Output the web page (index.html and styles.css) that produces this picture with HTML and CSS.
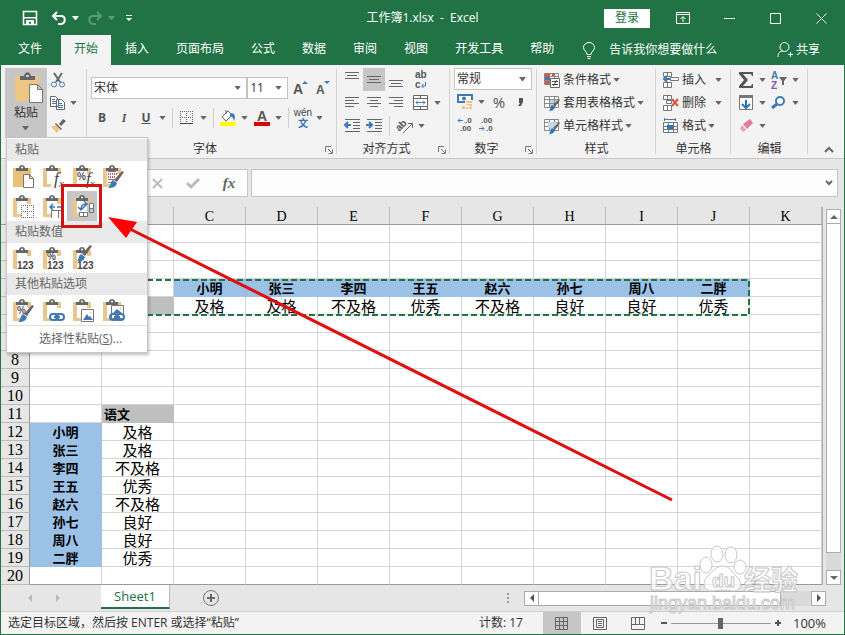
FILE: index.html
```html
<!DOCTYPE html>
<html lang="zh-CN">
<head>
    <meta charset="UTF-8">
    <meta name="viewport" content="width=device-width, initial-scale=1.0">
    <title>工作簿1.xlsx - Excel</title>
    <link rel="stylesheet" href="styles.css">
</head>
<body>
    <!-- shared icon shapes -->
    <svg class="sprite" aria-hidden="true">
        <symbol id="clip" viewBox="0 0 24 26">
            <path fill="#fff" d="M5 5h10v15H5z"/>
            <path fill="#e8c78e" d="M1 4h4v16h4v3H1zM15 4h4v6h-4z"/>
            <path fill="#666" d="M4 7V4h3c0-4 6-4 6 0h3v3z"/>
            <circle cx="10" cy="3.500" r="1" fill="#fff"/>
        </symbol>
        <symbol id="brush" viewBox="0 0 24 26">
            <path fill="#666" d="M20 7l2 1-7 10-3-2z"/>
            <path fill="#3f78b5" d="M11 16l4 3c-1 4-4 5-9 5 3-2 2-6 5-8z"/>
        </symbol>
        <symbol id="chain" viewBox="0 0 24 26">
            <g fill="none" stroke="#3f78b5" stroke-width="2"><rect x="8" y="16" width="8" height="6" rx="3"/><rect x="14" y="16" width="8" height="6" rx="3"/><path d="M12 19h6"/></g>
        </symbol>
        <symbol id="cellbox" viewBox="0 0 16 16">
            <path fill="#fff" stroke="#888" d="M.5 1.500h14v11H.5zM.5 4.500h14M.5 8.500h14M5.500 1.500v11M10.500 1.500v11"/>
        </symbol>
        <symbol id="pen" viewBox="0 0 16 16">
            <path fill="#666" d="M15 4l1 1-5 7-2-2z"/>
            <path fill="#2f74b5" d="M8 10l3 2c-1 3-3 4-6 4 2-2 1-5 3-6z"/>
        </symbol>
        <symbol id="launch" viewBox="0 0 8 8">
            <path fill="none" stroke="#777" d="M.5 6V.5H6M3 3l4 4M7.500 3.500v4h-4"/>
        </symbol>
    </svg>

    <div class="window">
        <header class="titlebar">
            <div class="quick">
                <button class="tool" aria-label="保存"><svg width="16" height="16" viewBox="0 0 16 16"><path fill="none" stroke="#fff" stroke-width="1.500" d="M1.500 1.500h13v13h-13z"/><path fill="#fff" d="M2 7h12v1.500H2zM4 10h8v5h-3v-3H7v3H4z"/></svg></button>
                <button class="tool undo" aria-label="撤消"><svg width="16" height="14" viewBox="0 0 16 14"><path fill="none" stroke="#fff" stroke-width="2" d="M6 1L2 5l4 4M2 5h8c5 0 5 7 0 8H7"/></svg></button>
                <i class="arrow light"></i>
                <button class="tool redo" aria-label="恢复"><svg width="16" height="14" viewBox="0 0 16 14"><path fill="none" stroke="#5c9a77" stroke-width="2" d="M10 1l4 4-4 4M14 5H6C1 5 1 12 6 13h3"/></svg></button>
                <i class="arrow faded"></i>
                <button class="tool more" aria-label="自定义快速访问工具栏"><svg width="6" height="8" viewBox="0 0 6 8"><path fill="#fff" d="M0 1h6v1H0zM0 4h6L3 7z"/></svg></button>
            </div>
            <div class="doc-title">工作簿1.xlsx &nbsp;- &nbsp;Excel</div>
            <div class="controls">
                <button class="login">登录</button>
                <button class="control" aria-label="功能区显示选项"><svg width="14" height="12" viewBox="0 0 14 12"><path fill="none" stroke="#fff" d="M.5.500h13v11H.5zM.5 2.500h13M7 10V5M4.500 7L7 4.500 9.500 7"/></svg></button>
                <button class="control" aria-label="最小化"><svg width="11" height="11" viewBox="0 0 11 11"><path stroke="#fff" d="M0 5.500h11"/></svg></button>
                <button class="control" aria-label="最大化"><svg width="11" height="11" viewBox="0 0 11 11"><path fill="none" stroke="#fff" d="M.5.500h10v10H.5z"/></svg></button>
                <button class="control" aria-label="关闭"><svg width="11" height="11" viewBox="0 0 11 11"><path stroke="#fff" d="M.5.500l10 10M10.500.500l-10 10"/></svg></button>
            </div>
        </header>

        <nav class="tabs">
            <button class="tab file">文件</button>
            <button class="tab active">开始</button>
            <button class="tab">插入</button>
            <button class="tab">页面布局</button>
            <button class="tab">公式</button>
            <button class="tab">数据</button>
            <button class="tab">审阅</button>
            <button class="tab">视图</button>
            <button class="tab">开发工具</button>
            <button class="tab">帮助</button>
            <button class="tell"><svg width="12" height="17" viewBox="0 0 12 17"><path fill="none" stroke="#fff" d="M4 12.500c0-3-3.500-4-3.500-7a5.500 5 0 0 1 11 0c0 3-3.500 4-3.500 7zM4 14.500h4M4.500 16.500h3"/></svg>告诉我你想要做什么</button>
            <button class="share"><svg width="16" height="16" viewBox="0 0 16 16"><path fill="none" stroke="#fff" d="M1 15c0-4 2-6 5-6M11 12.500h5M13.500 10v5"/><circle cx="7.500" cy="5" r="4.500" fill="none" stroke="#fff"/></svg>共享</button>
        </nav>

        <section class="ribbon">
            <div class="group clipboard">
                <div class="paste">
                    <button class="paste-button">
                        <svg width="30" height="31" viewBox="0 0 30 31"><path fill="#edc683" d="M1 4h24v25H1z"/><path fill="#666" d="M6 8V4h4c1-5 6-5 7 0h4v4z"/><path fill="#c6c6c6" d="M12 3h3v2h-3z"/><path fill="#fff" stroke="#777" d="M15.500 12.500h8l5 5v13h-13zM23.500 12.500v5h5"/></svg>
                        <span>粘贴</span>
                        <i class="arrow"></i>
                    </button>
                    <div class="menu">
                        <h2 class="menu-title">粘贴</h2>
                        <div class="menu-items">
                            <button class="item" aria-label="粘贴"><svg class="big"><path fill="#e8c07a" d="M1 4h18v19H1z"/><path fill="#666" d="M4 7V4h3c0-4 6-4 6 0h3v3z"/><circle cx="10" cy="3.500" r="1" fill="#fff"/><path fill="#fff" stroke="#777" d="M11.500 10.500h6l4 4v9h-10zM17.500 10.500v4h4"/></svg></button>
                            <button class="item" aria-label="公式"><svg class="big"><use href="#clip"/><text class="fx" x="12" y="20">f</text><text class="fx small" x="17" y="23">x</text></svg></button>
                            <button class="item" aria-label="公式和数字格式"><svg class="big"><use href="#clip"/><text class="pct" x="5" y="16">%</text><text class="fx" x="14" y="20">f</text><text class="fx small" x="18" y="23">x</text></svg></button>
                            <button class="item" aria-label="保留源格式"><svg class="big"><use href="#clip"/><path stroke="#777" d="M6 7.500h8M6 15.500h8M6 18.500h5"/><path stroke="#c55" stroke-width="2" stroke-dasharray="1 1" d="M6 10h9M6 13h8"/><use href="#brush"/></svg></button>
                            <button class="item" aria-label="无边框"><svg class="big"><use href="#clip"/><path fill="#fff" d="M9 11h13v12H9z"/><path fill="none" stroke="#666" stroke-dasharray="1 1" d="M9 11.500h13M9 17.500h13M9 23.500h13M9.500 11v12M15.500 11v12M21.500 11v12"/></svg></button>
                            <button class="item" aria-label="保留源列宽"><svg class="big"><use href="#clip"/><path fill="#fff" d="M9 16h13v8H9z"/><path fill="none" stroke="#777" d="M9.500 24v-7.500H22M16.500 17v7"/><path fill="none" stroke="#3f78b5" stroke-width="1.500" d="M11 10l-3 3 3 3M8 13h5M15 13h4"/></svg></button>
                            <button class="item selected" aria-label="转置"><svg class="big"><use href="#clip"/><path fill="#c6c6c6" d="M15 10h8v14h-8zM6 18h11v6H6z"/><path fill="#fff" stroke="#777" d="M7.500 18.500h8v4h-8zM11.500 18.500v4M17.500 9.500h4v9h-4z"/><path fill="#b8cde6" stroke="#777" d="M17.500 14.500h4v4h-4z"/><path fill="none" stroke="#3f78b5" stroke-width="1.500" d="M9 16c0-4 1-6 5-6M12 7l3 3-3 3M6 13l3 3 3-3"/></svg></button>
                        </div>
                        <h2 class="menu-title">粘贴数值</h2>
                        <div class="menu-items">
                            <button class="item" aria-label="值"><svg class="big"><use href="#clip"/><path fill="#fff" d="M5 15h17v9H5z"/><text class="num" x="5" y="23">123</text></svg></button>
                            <button class="item" aria-label="值和数字格式"><svg class="big"><use href="#clip"/><text class="pct" x="5" y="14">%</text><path fill="#fff" d="M5 15h17v9H5z"/><text class="num" x="5" y="23">123</text></svg></button>
                            <button class="item" aria-label="值和源格式"><svg class="big"><use href="#clip"/><use href="#brush" x="-2" y="-8" width="24" height="26"/><path fill="#fff" d="M5 15h17v9H5z"/><text class="num" x="5" y="23">123</text></svg></button>
                        </div>
                        <h2 class="menu-title">其他粘贴选项</h2>
                        <div class="menu-items">
                            <button class="item" aria-label="格式"><svg class="big"><use href="#clip"/><text class="pct" x="5" y="16">%</text><use href="#brush"/></svg></button>
                            <button class="item" aria-label="粘贴链接"><svg class="big"><use href="#clip"/><use href="#chain"/></svg></button>
                            <button class="item" aria-label="图片"><svg class="big"><use href="#clip"/><path fill="#fff" stroke="#777" d="M9.500 11.500h12v12h-12z"/><path fill="#3f78b5" d="M11 22l4-6 2 3 1-1 3 4z"/><circle cx="18.500" cy="14.500" r="1" fill="#edc683"/></svg></button>
                            <button class="item" aria-label="链接的图片"><svg class="big"><use href="#clip"/><path fill="#fff" stroke="#777" d="M9.500 7.500h12v13h-12z"/><path fill="#3f78b5" d="M11 15l4-4 5 4z"/><circle cx="18.500" cy="10.500" r="1" fill="#edc683"/><use href="#chain"/></svg></button>
                        </div>
                        <button class="menu-special">选择性粘贴(<u>S</u>)...</button>
                    </div>
                </div>
                <div class="clip-tools">
                    <button class="tool" aria-label="剪切"><svg width="16" height="16" viewBox="0 0 16 16"><path stroke="#666" stroke-width="2" d="M4 1l6 9M12 1L6 10"/><g fill="none" stroke="#3f78b5"><circle cx="4" cy="12.500" r="2.500"/><circle cx="12" cy="12.500" r="2.500"/></g></svg></button>
                    <div class="row"><button class="tool" aria-label="复制"><svg width="16" height="16" viewBox="0 0 16 16"><path fill="#fff" stroke="#666" d="M.5 1.500h5l3 3v7h-8zM6.500 4.500h5l3 3v7h-8z"/><path stroke="#3f78b5" d="M2 4.500h3M2 6.500h4M2 8.500h4M8 8.500h4M8 10.500h5M8 12.500h5"/></svg></button><i class="arrow"></i></div>
                    <button class="tool" aria-label="格式刷"><svg width="16" height="16" viewBox="0 0 16 16"><path fill="#edc683" d="M1 9l5-2 4 4-3 4z"/><path fill="#666" d="M6 5l6 6-1 1-6-6zM9 6l4-5 3 2-5 5z"/></svg></button>
                </div>
            </div>

            <div class="group font">
                <div class="group-body">
                    <div class="row top">
                        <span class="combo family"><select aria-label="字体"><option>宋体</option></select><i class="arrow"></i></span>
                        <span class="combo size"><select aria-label="字号"><option>11</option></select><i class="arrow"></i></span>
                        <button class="tool" aria-label="增大字号"><svg width="16" height="16" viewBox="0 0 16 16"><text class="glyph" x="1" y="14">A</text><path fill="#3f78b5" d="M10 4l3-3 3 3z"/></svg></button>
                        <button class="tool" aria-label="减小字号"><svg width="16" height="16" viewBox="0 0 16 16"><text class="glyph less" x="2" y="14">A</text><path fill="#3f78b5" d="M10 1h6l-3 3z"/></svg></button>
                    </div>
                    <div class="row low">
                        <button class="tool"><b>B</b></button>
                        <button class="tool"><em>I</em></button>
                        <button class="tool"><u>U</u></button><i class="arrow"></i>
                        <i class="sep"></i>
                        <button class="tool" aria-label="边框"><svg width="14" height="14" viewBox="0 0 14 14"><path fill="none" stroke="#666" stroke-dasharray="1 1" d="M0 .5h13M0 6.500h13M.5 0v12M6.500 0v12M12.500 0v12"/><path stroke="#444" d="M0 12.500h13"/></svg></button><i class="arrow"></i>
                        <i class="sep"></i>
                        <button class="tool" aria-label="填充颜色"><svg width="18" height="18" viewBox="0 0 18 18"><path fill="#fff" stroke="#666" d="M3 8l6-6 4 4-6 6zM7 5V1"/><path fill="#3f78b5" d="M11 4c5 0 6 3 4 8-1-3-1-4-4-5z"/><path fill="#ff0" d="M1 13h16v4H1z"/></svg></button><i class="arrow"></i>
                        <button class="tool" aria-label="字体颜色"><svg width="18" height="18" viewBox="0 0 18 18"><text class="glyph" x="4" y="12">A</text><path fill="#e00000" d="M1 13h16v4H1z"/></svg></button><i class="arrow"></i>
                        <i class="sep"></i>
                        <button class="tool pinyin">wén<span>文</span></button><i class="arrow"></i>
                    </div>
                </div>
                <div class="group-name"><span>字体</span><svg class="launch"><use href="#launch"/></svg></div>
            </div>

            <div class="group align">
                <div class="group-body">
                    <div class="row">
                        <button class="tool" aria-label="顶端对齐"><svg width="16" height="16" viewBox="0 0 16 16"><path stroke="#666" d="M1 .5h14M3 3.500h10M1 6.500h14"/></svg></button>
                        <button class="tool pressed" aria-label="垂直居中"><svg width="16" height="16" viewBox="0 0 16 16"><path stroke="#666" d="M1 4.500h14M3 7.500h10M1 10.500h14"/></svg></button>
                        <button class="tool" aria-label="底端对齐"><svg width="16" height="16" viewBox="0 0 16 16"><path stroke="#666" d="M1 8.500h14M3 11.500h10M1 14.500h14"/></svg></button>
                        <button class="tool wide" aria-label="自动换行"><svg width="16" height="18" viewBox="0 0 16 18"><text class="wrap" x="2" y="7">ab</text><text class="wrap" x="2" y="17">c</text><path fill="none" stroke="#3f78b5" d="M12.500 11v4H9M10.500 13L8.500 15l2 2"/></svg></button>
                    </div>
                    <div class="row">
                        <button class="tool" aria-label="左对齐"><svg width="16" height="16" viewBox="0 0 16 16"><path stroke="#666" d="M1 2.500h14M1 5.500h9M1 8.500h14M1 11.500h9"/></svg></button>
                        <button class="tool" aria-label="居中"><svg width="16" height="16" viewBox="0 0 16 16"><path stroke="#666" d="M1 2.500h14M4 5.500h8M1 8.500h14M4 11.500h8"/></svg></button>
                        <button class="tool" aria-label="右对齐"><svg width="16" height="16" viewBox="0 0 16 16"><path stroke="#666" d="M1 2.500h14M6 5.500h9M1 8.500h14M6 11.500h9"/></svg></button>
                        <button class="tool wide" aria-label="合并后居中"><svg width="16" height="16" viewBox="0 0 16 16"><path fill="#fff" stroke="#666" d="M.5.500h14v14H.5zM.5 3.500h14M.5 11.500h14M7.500.500v3M7.500 11.500v3"/><path fill="none" stroke="#3f78b5" d="M3 7.500h9M5 5.500l-2 2 2 2M10 5.500l2 2-2 2"/></svg></button><i class="arrow"></i>
                    </div>
                    <div class="row">
                        <button class="tool" aria-label="减少缩进量"><svg width="16" height="16" viewBox="0 0 16 16"><path stroke="#666" d="M1 1.500h15M9 4.500h7M9 7.500h7M9 10.500h7M1 13.500h15"/><path fill="none" stroke="#3f78b5" stroke-width="2" d="M1 7h6M4 4L1 7l3 3"/></svg></button>
                        <button class="tool" aria-label="增加缩进量"><svg width="16" height="16" viewBox="0 0 16 16"><path stroke="#666" d="M1 1.500h15M9 4.500h7M9 7.500h7M9 10.500h7M1 13.500h15"/><path fill="none" stroke="#3f78b5" stroke-width="2" d="M0 7h6M3 4l3 3-3 3"/></svg></button>
                        <i class="sep"></i>
                        <button class="tool" aria-label="方向"><svg width="18" height="16" viewBox="0 0 18 16"><text class="wrap" transform="rotate(-45 6 11)" x="2" y="11">ab</text><path fill="none" stroke="#666" d="M7 15l9-9M12 5.500h4.500V10"/></svg></button><i class="arrow"></i>
                    </div>
                </div>
                <div class="group-name"><span>对齐方式</span><svg class="launch"><use href="#launch"/></svg></div>
            </div>

            <div class="group number">
                <div class="group-body">
                    <div class="row"><span class="combo format"><select aria-label="数字格式"><option>常规</option></select><i class="arrow"></i></span></div>
                    <div class="row">
                        <button class="tool" aria-label="会计数字格式"><svg width="16" height="16" viewBox="0 0 16 16"><path fill="#3f78b5" d="M0 0h16v9H0z"/><path fill="#fff" d="M2 2h12v5H2z"/><circle cx="7" cy="4.500" r="2" fill="#3f78b5"/><path fill="#edc683" stroke="#f3f3f3" d="M8.500 6.500h7v9h-7zM4.500 11.500h7v4h-7zM8.500 9.500h7M8.500 12.500h7"/></svg></button><i class="arrow"></i>
                        <button class="tool percent">%</button>
                        <button class="tool" aria-label="千位分隔样式"><svg width="6" height="8" viewBox="0 0 6 8"><path fill="#555" d="M1 0h4v4L3 8H0l2-3H1z"/></svg></button>
                    </div>
                    <div class="row">
                        <button class="tool" aria-label="增加小数位数"><svg width="16" height="16" viewBox="0 0 16 16"><text class="dec" x="8" y="6">.0</text><text class="dec" x="3" y="14">.00</text><path fill="none" stroke="#3f78b5" d="M1 3.500h5M3 1.500l-2 2 2 2"/></svg></button>
                        <button class="tool" aria-label="减少小数位数"><svg width="16" height="16" viewBox="0 0 16 16"><text class="dec" x="2" y="6">.00</text><text class="dec" x="7" y="14">.0</text><path fill="none" stroke="#3f78b5" d="M0 11.500h5M3 9.500l2 2-2 2"/></svg></button>
                    </div>
                </div>
                <div class="group-name"><span>数字</span><svg class="launch"><use href="#launch"/></svg></div>
            </div>

            <div class="group styles">
                <div class="group-body">
                    <button class="command"><svg width="16" height="16" viewBox="0 0 16 16"><use href="#cellbox"/><path fill="#c0614d" d="M1 1h5v4H1zM1 9h4v4H1zM8 1h3v3H8z"/><path fill="#3f78b5" d="M1 5h5v3H1z"/><path fill="#fff" stroke="#666" d="M6.500 6.500h9v9h-9z"/><path stroke="#444" d="M8 9.500h6M8 12.500h6M12.500 8l-3 6"/></svg>条件格式<i class="arrow"></i></button>
                    <button class="command"><svg width="16" height="16" viewBox="0 0 16 16"><use href="#cellbox"/><path fill="#c4d6ea" d="M6 5h4v3H6zM6 9h4v3H6zM11 5h3v3h-3z"/><use href="#pen"/></svg>套用表格格式<i class="arrow"></i></button>
                    <button class="command"><svg width="16" height="16" viewBox="0 0 16 16"><use href="#cellbox"/><path fill="#c4d6ea" d="M4 4h8v6H4z"/><use href="#pen"/></svg>单元格样式<i class="arrow"></i></button>
                </div>
                <div class="group-name"><span>样式</span></div>
            </div>

            <div class="group cells">
                <div class="group-body">
                    <button class="command spread"><svg width="16" height="16" viewBox="0 0 16 16"><path fill="#fff" stroke="#777" d="M.5.500h8v4h-8zM4.500.500v4M.5 10.500h8v5h-8zM4.500 10.500v5M7.500 5.500h8v3h-8z"/><path fill="none" stroke="#3f78b5" stroke-width="2" d="M1 7h6M4 4L1 7l3 3"/></svg>插入<i class="arrow"></i></button>
                    <button class="command spread"><svg width="16" height="16" viewBox="0 0 16 16"><path fill="#fff" stroke="#777" d="M.5.500h8v4h-8zM4.500.500v4M.5 10.500h8v5h-8zM4.500 10.500v5M3.500 5.500h5v3h-5z"/><path stroke="#d8563f" stroke-width="2" d="M9 4l6 7M15 4l-6 7"/></svg>删除<i class="arrow"></i></button>
                    <button class="command"><svg width="16" height="16" viewBox="0 0 16 16"><path fill="#fff" stroke="#777" d="M.5 4.500h14v10H.5zM.5 8.500h14M.5 11.500h14M5.500 4.500v10M10.500 4.500v10"/><path fill="#2f74b5" d="M4 7h6v4H4z"/><path fill="none" stroke="#3f78b5" d="M1 1.500h12M1.500 0v3M12.500 0v3"/></svg>格式<i class="arrow"></i></button>
                </div>
                <div class="group-name"><span>单元格</span></div>
            </div>

            <div class="group edit">
                <div class="group-body">
                    <div class="row">
                        <button class="tool" aria-label="自动求和"><svg width="16" height="16" viewBox="0 0 16 16"><path fill="#555" d="M1 0h14v4h-1l-1-2H5l5 6-5 6h8l1-2h1v4H1v-2l5-6-5-6z"/></svg></button><i class="arrow"></i>
                        <button class="tool" aria-label="排序和筛选"><svg width="16" height="18" viewBox="0 0 16 18"><text class="sort" fill="#3f78b5" x="0" y="8">A</text><text class="sort" fill="#8a4fb0" x="0" y="18">Z</text><path fill="#666" d="M8 6h8l-3 4v4h-2v-4z"/></svg></button><i class="arrow"></i>
                    </div>
                    <div class="row">
                        <button class="tool" aria-label="填充"><svg width="16" height="16" viewBox="0 0 16 16"><path fill="#fff" stroke="#777" d="M1.500.500h13v14h-13z"/><path fill="#777" d="M1 0h14v3H1z"/><path fill="none" stroke="#2f74b5" stroke-width="2" d="M8 5v8M4 9l4 4 4-4"/></svg></button><i class="arrow"></i>
                        <button class="tool" aria-label="查找和选择"><svg width="16" height="16" viewBox="0 0 16 16"><circle cx="9" cy="6" r="4" fill="#fff" stroke="#3f78b5" stroke-width="2"/><path stroke="#3f78b5" stroke-width="3" d="M6 9l-5 4"/></svg></button><i class="arrow"></i>
                    </div>
                    <div class="row">
                        <button class="tool" aria-label="清除"><svg width="16" height="16" viewBox="0 0 16 16"><path fill="#e07f98" d="M5 6l7-5 3 4-6 6z"/><path fill="#e8a0b2" d="M4 7l4 5-3 2-3-3z"/></svg></button><i class="arrow"></i>
                    </div>
                </div>
                <div class="group-name"><span>编辑</span></div>
            </div>
            <button class="collapse" aria-label="折叠功能区"><svg width="10" height="7" viewBox="0 0 10 7"><path fill="none" stroke="#666" stroke-width="2" d="M1 5l4-4 4 4"/></svg></button>
        </section>

        <section class="formula-bar">
            <input class="name-box" type="text" aria-label="名称框">
            <div class="formula-tools">
                <button class="tool" aria-label="取消"><svg width="11" height="11" viewBox="0 0 11 11"><path stroke="#bbb" stroke-width="2" d="M1 1l9 9M10 1l-9 9"/></svg></button>
                <button class="tool" aria-label="输入"><svg width="14" height="11" viewBox="0 0 14 11"><path fill="none" stroke="#bbb" stroke-width="3" d="M1 5l4 4 8-8"/></svg></button>
                <button class="tool insert-fx">fx</button>
            </div>
            <div class="formula-box">
                <input type="text" aria-label="编辑栏">
                <svg width="8" height="6" viewBox="0 0 8 6"><path fill="none" stroke="#666" stroke-width="2" d="M1 1l3 3 3-3"/></svg>
            </div>
        </section>

        <main class="sheet">
            <table class="grid" id="grid"></table>
            <div class="vscroll">
                <button class="scroll-button" aria-label="向上"><svg width="8" height="4" viewBox="0 0 8 4"><path fill="#666" d="M0 4l4-4 4 4z"/></svg></button>
                <div class="vtrack"><div class="vthumb"></div></div>
                <button class="scroll-button" aria-label="向下"><svg width="8" height="4" viewBox="0 0 8 4"><path fill="#666" d="M0 0h8L4 4z"/></svg></button>
            </div>
        </main>

        <div class="sheet-bar">
            <div class="sheet-nav"><svg width="4" height="8" viewBox="0 0 4 8"><path fill="#bbb" d="M4 0v8L0 4z"/></svg><svg width="4" height="8" viewBox="0 0 4 8"><path fill="#bbb" d="M0 0v8l4-4z"/></svg></div>
            <button class="sheet-tab">Sheet1</button>
            <button class="add-sheet" aria-label="新工作表"><svg width="16" height="16" viewBox="0 0 16 16"><circle cx="8" cy="8" r="7.500" fill="none" stroke="#777"/><path stroke="#666" stroke-width="2" d="M4 8h8M8 4v8"/></svg></button>
            <svg class="grip" width="2" height="11" viewBox="0 0 2 11"><path fill="#999" d="M0 0h2v2H0zM0 4h2v2H0zM0 8h2v2H0z"/></svg>
            <div class="hscroll">
                <button class="scroll-button" aria-label="向左"><svg width="4" height="8" viewBox="0 0 4 8"><path fill="#555" d="M4 0v8L0 4z"/></svg></button>
                <div class="htrack"><div class="hthumb"></div></div>
                <button class="scroll-button" aria-label="向右"><svg width="4" height="8" viewBox="0 0 4 8"><path fill="#555" d="M0 0v8l4-4z"/></svg></button>
            </div>
        </div>

        <footer class="status">
            <span class="message">选定目标区域，然后按 ENTER 或选择“粘贴”</span>
            <span class="count">计数: 17</span>
            <button class="view current" aria-label="普通"><svg width="13" height="13" viewBox="0 0 13 13"><path fill="none" stroke="#666" d="M.5.500h12v12H.5zM.5 4.500h12M.5 8.500h12M4.500.500v12M8.500.500v12"/></svg></button>
            <button class="view" aria-label="页面布局"><svg width="14" height="13" viewBox="0 0 14 13"><path fill="none" stroke="#666" d="M.5.500h13v12H.5zM3.500 2.500h7v8h-7zM5 4.500h4M5 6.500h4M5 8.500h4"/></svg></button>
            <button class="view" aria-label="分页预览"><svg width="14" height="13" viewBox="0 0 14 13"><path fill="none" stroke="#666" d="M.5.500h13v12H.5zM.5 7.500h8v-7M4.500.500v7M8.500 7.500h5"/></svg></button>
            <button class="zoom-step" aria-label="缩小"><svg width="8" height="8" viewBox="0 0 8 8"><path stroke="#555" stroke-width="2" d="M1 4h6"/></svg></button>
            <input class="zoom" type="range" min="0" max="100" value="50" aria-label="缩放">
            <button class="zoom-step" aria-label="放大"><svg width="8" height="8" viewBox="0 0 8 8"><path stroke="#555" stroke-width="2" d="M1 4h6M4 1v6"/></svg></button>
            <span class="zoom-value">100%</span>
        </footer>

        <svg class="pointer" width="566" height="286" viewBox="0 0 566 286"><path stroke="#e00f0f" stroke-width="3" d="M22 12l542 271"/><path fill="#f00" d="M0 0l29 5-11 16z"/></svg>

        <svg class="watermark" width="152" height="74" viewBox="0 0 152 74">
            <g class="mark">
                <text class="brand" x="0" y="47">Bai</text>
                <ellipse cx="57" cy="22" rx="6" ry="8"/><ellipse cx="68" cy="11" rx="6" ry="8"/><ellipse cx="82" cy="12" rx="6" ry="8"/><ellipse cx="91" cy="24" rx="6" ry="7"/>
                <path d="M74 23c7 0 9 7 14 11 6 5 4 14-3 14-5 0-6-1-11-1s-7 1-12 1c-8 0-9-10-3-15s8-10 15-10z"/>
                <text class="du" x="63" y="44">du</text>
                <text class="exp" x="95" y="47">经验</text>
                <text class="url" x="1" y="66">jingyan.baidu.com</text>
            </g>
        </svg>
    </div>

    <script>
        const columns = ["A", "B", "C", "D", "E", "F", "G", "H", "I", "J", "K"];
        const names = ["小明", "张三", "李四", "王五", "赵六", "孙七", "周八", "二胖"];
        const grades = ["及格", "及格", "不及格", "优秀", "不及格", "良好", "良好", "优秀"];
        const cells = {
            B5: ["语文", "subject"],
            B11: ["语文", "subject"]
        };

        for (let i = 0; i < names.length; i++) {
            cells[columns[i + 2] + 4] = [names[i], "name"];
            cells[columns[i + 2] + 5] = [grades[i], "grade"];
            cells["A" + (12 + i)] = [names[i], "name"];
            cells["B" + (12 + i)] = [grades[i], "grade"];
        }

        let html = "<thead><tr><th class='corner'></th>";
        for (const column of columns) {
            html += `<th scope="col">${column}</th>`;
        }
        html += "</tr></thead><tbody>";
        for (let row = 1; row <= 20; row++) {
            html += `<tr><th scope="row">${row}</th>`;
            for (const column of columns) {
                const cell = cells[column + row] || ["", ""];
                if (column + row === "A4") {
                    // copied range A4:J5
                    html += `<td class="copy-start"><svg class="ants"><rect x="1" y="1" width="100%" height="100%"/></svg></td>`;
                } else {
                    html += `<td class="${cell[1]}">${cell[0]}</td>`;
                }
            }
            html += "</tr>";
        }
        document.getElementById("grid").innerHTML = html + "</tbody>";
    </script>
</body>
</html>
```
FILE: styles.css
```css
* {
    box-sizing: border-box;
}

body {
    margin: 0;
    font-family: "Open Sans", "Noto Sans CJK SC", sans-serif;
    font-size: 12px;
    line-height: 16px;
    color: #333;
}

button, input, select {
    margin: 0;
    padding: 0;
    border: none;
    border-radius: 0;
    background: none;
    font: inherit;
    color: inherit;
}

svg {
    display: block;
    flex: none;
    overflow: visible;
}

svg text {
    font-family: "Liberation Sans", "Noto Sans CJK SC", sans-serif;
}

.sprite {
    position: absolute;
    width: 0;
    height: 0;
}

.window {
    position: relative;
    display: flex;
    flex-direction: column;
    min-height: 100vh;
    border: 1px solid #217346;
    background: #e6e6e6;
    overflow: hidden;
}

.row {
    display: flex;
    align-items: center;
}

.tool {
    display: flex;
    align-items: center;
    justify-content: center;
    width: 22px;
    height: 23px;
    flex: none;
}

.arrow {
    flex: none;
    width: 12px;
    height: 4px;
    background: #666;
    clip-path: polygon(2px 0, 9px 0, 6px 4px, 5px 4px);
}

.arrow.light {
    background: #fff;
}

.arrow.faded {
    background: #5c9a77;
}

.sep {
    width: 1px;
    height: 20px;
    margin: 0 4px;
    background: #d0d0d0;
}

/* title bar */
.titlebar {
    display: grid;
    grid-template-columns: 1fr auto 1fr;
    align-items: center;
    height: 34px;
    background: #217346;
    color: #fff;
}

.quick {
    display: flex;
    align-items: center;
    padding-left: 18px;
}

.undo {
    margin-left: 7px;
}

.redo {
    margin-left: 2px;
}

.controls {
    display: flex;
    align-items: center;
    justify-content: flex-end;
}

.login {
    width: 46px;
    height: 19px;
    margin-right: 10px;
    background: #fff;
    color: #217346;
}

.control {
    display: flex;
    align-items: center;
    justify-content: center;
    width: 46px;
    height: 30px;
}

/* ribbon tabs */
.tabs {
    display: flex;
    gap: 1px;
    height: 30px;
    padding: 0 24px 0 4px;
    background: #217346;
    color: #fff;
}

.tab {
    padding: 0 13px 2px;
}

.file {
    margin-right: 5px;
}

.tab.active {
    background: #f3f3f3;
    color: #217346;
}

.tell, .share {
    display: flex;
    align-items: center;
}

.tell {
    gap: 14px;
    margin-left: 15px;
}

.share {
    gap: 3px;
    margin-left: auto;
}

/* ribbon */
.ribbon {
    display: flex;
    height: 94px;
    border-bottom: 1px solid #c8c8c8;
    background: #f3f3f3;
}

.group {
    position: relative;
    display: flex;
    flex-direction: column;
    padding: 3px 4px 0;
}

.group::after {
    content: "";
    position: absolute;
    top: 4px;
    right: 0;
    bottom: 4px;
    width: 1px;
    background: #d4d4d4;
}

.group-body {
    height: 69px;
}

.group-name {
    display: flex;
    align-items: center;
    height: 21px;
    padding-top: 2px;
}

.group-name span {
    flex: 1;
    text-align: center;
}

.launch {
    width: 8px;
    height: 8px;
    margin: 2px 0 0 6px;
}

.clipboard {
    flex-direction: row;
    width: 86px;
}

.paste {
    position: relative;
    width: 42px;
}

.paste-button {
    display: flex;
    flex-direction: column;
    align-items: center;
    width: 100%;
    height: 70px;
    padding-top: 4px;
    background: #c6c6c6;
}

.paste-button svg {
    margin-left: 6px;
}

.paste-button span {
    padding-top: 2px;
}

.paste-button .arrow {
    margin-top: 5px;
}

.clip-tools .arrow {
    margin-left: -1px;
}

.font {
    width: 250px;
}

.align {
    width: 113px;
}

.number {
    width: 87px;
}

.styles {
    width: 119px;
}

.cells {
    width: 75px;
}

.edit {
    width: 77px;
}

.combo {
    display: grid;
    grid-template-columns: 1fr 14px;
    align-items: center;
    height: 22px;
    border: 1px solid #c3c3c3;
    background: #fff;
}

.combo select {
    grid-area: 1 / 1 / 2 / 3;
    width: 100%;
    height: 20px;
    padding-left: 2px;
    appearance: none;
}

.combo .arrow {
    grid-area: 1 / 2;
    pointer-events: none;
}

.family {
    width: 157px;
}

.size {
    width: 41px;
    margin-right: 1px;
}

.format {
    width: 78px;
}

.font .top {
    padding-top: 8px;
}

.font .low {
    padding-top: 7px;
}

.font .low .tool {
    font-size: 12px;
    color: #555;
}

.font .low .tool em {
    font-family: "Liberation Serif", serif;
    font-weight: bold;
}

.font .low .tool u {
    font-weight: bold;
}

.font .low .pinyin {
    flex-direction: column;
    font-family: "Liberation Sans", "Noto Sans CJK SC", sans-serif;
    font-size: 10px;
    line-height: 11px;
    color: #444;
}

.pinyin span {
    color: #2f74b5;
    font-weight: bold;
}

.font .low .sep {
    margin: 0 3px;
}

.pressed {
    background: #c6c6c6;
}

.wide {
    margin-left: 3px;
}

.percent {
    font-size: 15px;
    color: #555;
}

.command {
    display: flex;
    align-items: center;
    width: 100%;
    height: 23px;
    padding-left: 3px;
    white-space: nowrap;
}

.command svg {
    margin-right: 3px;
}

.spread .arrow {
    margin-left: auto;
}

.cells .group-body {
    padding-right: 2px;
}

.edit .arrow {
    margin-right: -1px;
}

.collapse {
    align-self: flex-end;
    margin: 0 10px 4px auto;
}

.glyph {
    font-size: 14px;
    font-weight: bold;
    fill: #555;
}

.glyph.less {
    font-size: 12px;
}

.wrap {
    font-size: 10px;
    font-weight: bold;
    fill: #555;
}

.dec {
    font-size: 8px;
    font-weight: bold;
    fill: #555;
}

.sort {
    font-size: 10px;
    font-weight: bold;
}

/* paste menu */
.menu {
    position: absolute;
    top: 69px;
    left: 1px;
    z-index: 2;
    width: 142px;
    padding: 1px 0;
    border: 1px solid #c6c6c6;
    background: #fff;
    box-shadow: 1px 2px 3px rgba(0, 0, 0, 0.25);
    color: #666;
}

.menu-title {
    height: 22px;
    margin: 0;
    padding: 3px 0 0 8px;
    background: #e9e9e9;
    font-size: 12px;
    font-weight: normal;
}

.menu-items {
    display: flex;
    flex-wrap: wrap;
}

.item {
    position: relative;
    display: flex;
    align-items: flex-start;
    width: 30px;
    height: 30px;
    padding: 3px 0 0 5px;
}

.item.selected {
    background: #c6c6c6;
}

/* red frame around the transpose option */
.item.selected::after {
    content: "";
    position: absolute;
    top: -7px;
    left: -6px;
    width: 35px;
    height: 38px;
    border: 3px solid #d01414;
}

.big {
    width: 24px;
    height: 26px;
}

.big .fx {
    font-family: "Liberation Serif", serif;
    font-size: 17px;
    font-style: italic;
    fill: #444;
}

.big .small {
    font-size: 11px;
}

.pct {
    font-size: 10px;
    font-weight: bold;
    fill: #555;
}

.num {
    font-size: 10px;
    font-weight: bold;
    fill: #444;
}

.menu-special {
    width: 100%;
    height: 26px;
    padding-left: 7px;
    border-top: 1px solid #e1e1e1;
}

/* formula bar */
.formula-bar {
    display: flex;
    height: 48px;
    padding: 10px 6px 10px 5px;
}

.name-box, .formula-tools, .formula-box {
    height: 28px;
    border: 1px solid #c6c6c6;
    background: #fdfdfd;
}

.name-box {
    width: 120px;
    margin-right: 6px;
}

.formula-tools {
    display: flex;
    align-items: center;
    justify-content: flex-end;
    gap: 14px;
    width: 116px;
    margin-right: 3px;
    padding-right: 7px;
}

.insert-fx {
    font-family: "Liberation Serif", serif;
    font-size: 15px;
    font-style: italic;
    font-weight: bold;
    color: #666;
}

.formula-box {
    display: flex;
    flex: 1;
    align-items: center;
    padding-right: 4px;
}

.formula-box input {
    flex: 1;
    min-width: 0;
}

/* sheet */
.sheet {
    display: flex;
}

.grid {
    flex: 1;
    width: 0;
    table-layout: fixed;
    border-spacing: 0;
    font-size: 15px;
    line-height: 16px;
    color: #000;
}

.grid th, .grid td {
    height: 18px;
    padding: 1px 0 0;
    border-right: 1px solid #d4d4d4;
    border-bottom: 1px solid #d4d4d4;
    white-space: nowrap;
}

.grid td {
    background: #fff;
}

.grid th {
    background: #e6e6e6;
    font-family: "Liberation Serif", serif;
    font-weight: normal;
    border-color: #bbb;
}

.grid thead th {
    padding-top: 3px;
    border-bottom-color: #999;
    font-size: 14px;
    line-height: 14px;
}

.grid tbody th {
    border-right-color: #999;
    font-size: 16px;
}

.grid .corner {
    width: 29px;
}

.grid tr:last-child td {
    border-bottom-color: #999;
}

.grid .name {
    border-color: #9bc2e6;
    background: #9bc2e6;
    font-size: 13px;
    font-weight: bold;
    text-align: center;
}

.grid .grade {
    text-align: center;
}

.grid .subject {
    padding-left: 2px;
    border-color: #bfbfbf;
    background: #bfbfbf;
    font-size: 13px;
    font-weight: bold;
}

.copy-start {
    position: relative;
}

.ants {
    position: absolute;
    top: 0;
    left: -1px;
    z-index: 1;
    width: calc(1000% + 9px);
    height: 35px;
}

.ants rect {
    fill: none;
    stroke: #217346;
    stroke-width: 2;
    stroke-dasharray: 6 3;
}

.vscroll {
    display: flex;
    flex-direction: column;
    width: 22px;
    padding: 2px 3px 0;
    border-left: 1px solid #aaa;
}

.scroll-button {
    display: flex;
    align-items: center;
    justify-content: center;
    width: 15px;
    height: 15px;
    flex: none;
    border: 1px solid #ababab;
    background: #fff;
}

.vtrack {
    flex: 1;
    background: #dadada;
}

.vthumb {
    width: 15px;
    height: 95%;
    border: 1px solid #ababab;
    border-top: none;
    background: #fff;
}

/* sheet tabs */
.sheet-bar {
    display: flex;
    align-items: center;
    height: 27px;
    padding-right: 18px;
    border-bottom: 1px solid #d0d0d0;
}

.sheet-nav {
    display: flex;
    justify-content: center;
    gap: 24px;
    width: 100px;
    padding-right: 14px;
}

.sheet-tab {
    align-self: flex-start;
    width: 69px;
    height: 24px;
    border-right: 1px solid #bbb;
    border-bottom: 2px solid #217346;
    background: #fff;
    font-size: 13px;
    color: #217346;
}

.add-sheet {
    margin-left: 33px;
}

.grip {
    margin-left: auto;
}

.hscroll {
    display: flex;
    flex: 0 1 302px;
    margin-left: 15px;
}

.htrack {
    flex: 1;
    background: #dadada;
}

.hthumb {
    width: 89%;
    height: 15px;
    border: 1px solid #ababab;
    border-left: none;
    background: #fff;
}

/* status bar */
.status {
    display: flex;
    align-items: center;
    height: 22px;
    padding: 0 18px 0 7px;
    background: #f3f3f3;
}

.count {
    margin-left: auto;
    margin-right: 20px;
}

.view {
    display: flex;
    align-items: center;
    justify-content: center;
    width: 38px;
    height: 22px;
}

.view.current {
    background: #c6c6c6;
}

.zoom-step {
    margin: 0 3px;
}

.zoom {
    width: 100px;
    height: 12px;
    appearance: none;
    background: linear-gradient(#999, #999) center / 100% 1px no-repeat;
}

.zoom::-webkit-slider-thumb {
    appearance: none;
    width: 5px;
    height: 11px;
    background: #666;
}

.zoom-value {
    margin-left: 8px;
    font-size: 13px;
}

/* arrow pointing at the transpose option */
.pointer {
    position: absolute;
    top: 216px;
    left: 107px;
    z-index: 3;
}

.watermark {
    position: absolute;
    right: 43px;
    bottom: 17px;
    z-index: 3;
}

.mark {
    fill: rgba(255, 255, 255, 0.8);
    stroke: #c8c8c8;
    stroke-width: 1;
    font-weight: bold;
}

.brand {
    font-size: 34px;
}

.du {
    font-size: 19px;
}

.exp {
    font-size: 27px;
}

.url {
    font-size: 18px;
    font-weight: normal;
}
```
